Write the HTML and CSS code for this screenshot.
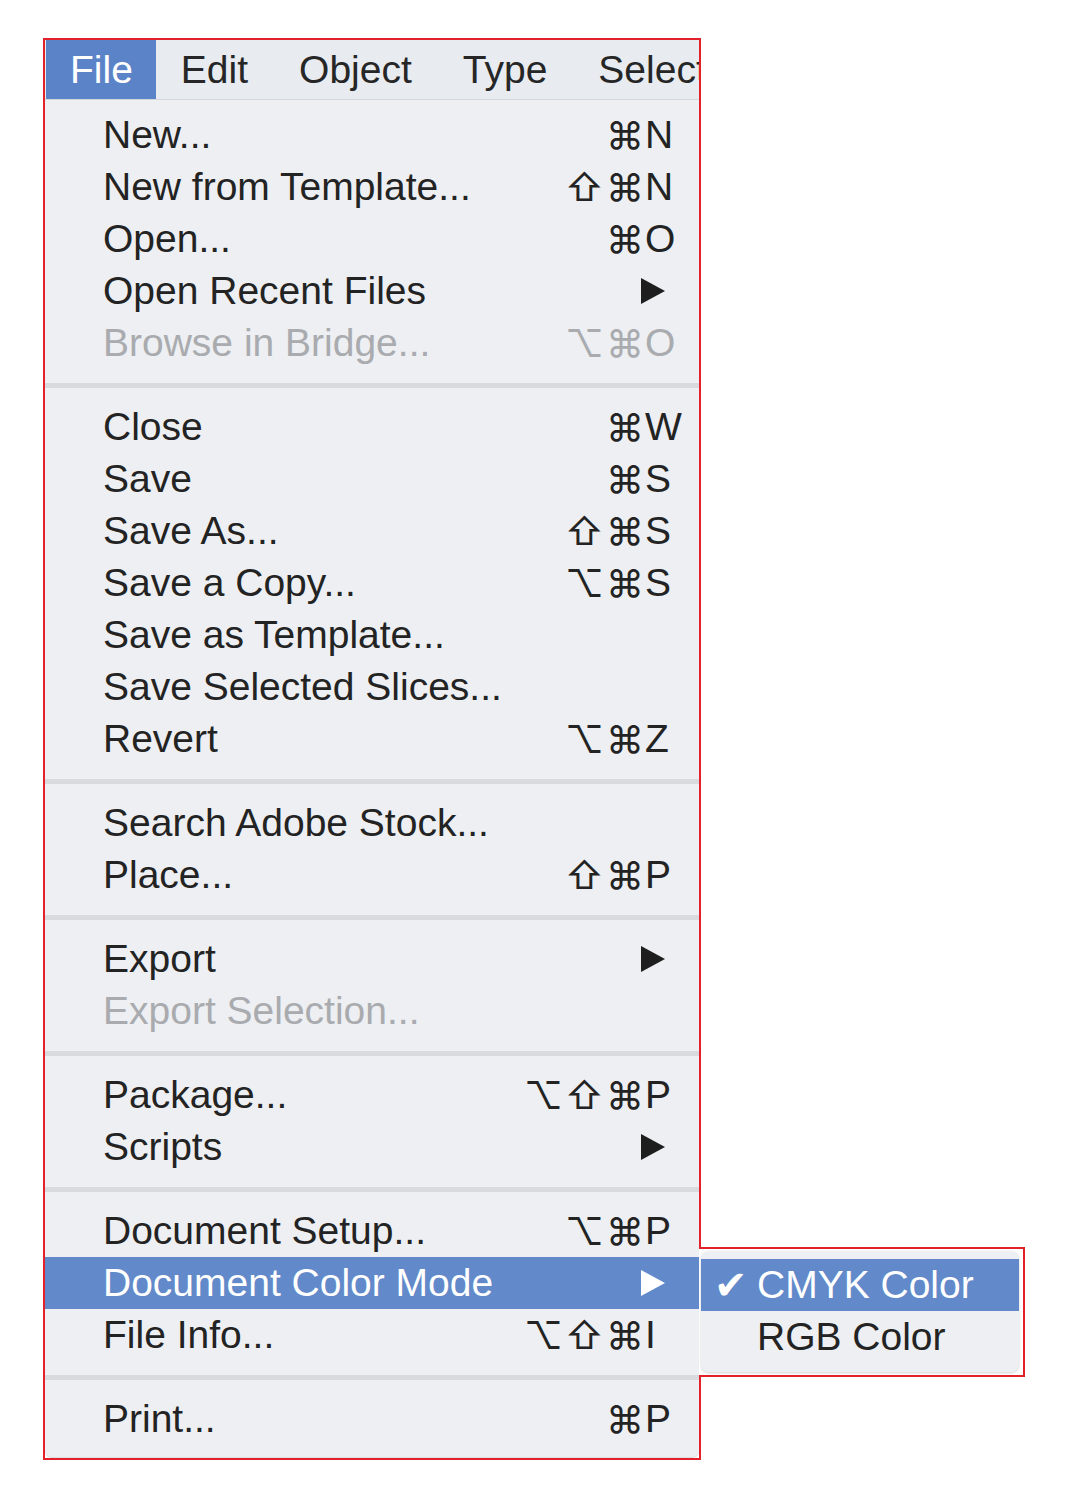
FILE: index.html
```html
<!DOCTYPE html>
<html>
<head>
<meta charset="utf-8">
<link rel="stylesheet" href="styles.css">
</head>
<body>
<div class="stage">
  <div class="menu-frame">
    <div class="menubar">
      <span class="mb-item active">File</span>
      <span class="mb-item">Edit</span>
      <span class="mb-item">Object</span>
      <span class="mb-item">Type</span>
      <span class="mb-item">Select</span>
    </div>
    <div class="panel">
      <div class="row"><span class="label">New...</span><span class="mods">⌘</span><span class="key">N</span></div>
      <div class="row"><span class="label">New from Template...</span><span class="mods">⇧⌘</span><span class="key">N</span></div>
      <div class="row"><span class="label">Open...</span><span class="mods">⌘</span><span class="key">O</span></div>
      <div class="row"><span class="label">Open Recent Files</span><span class="sub"><svg width="24" height="26" viewBox="0 0 24 26"><polygon points="0,0 24,13 0,26"/></svg></span></div>
      <div class="row disabled"><span class="label">Browse in Bridge...</span><span class="mods">⌥⌘</span><span class="key">O</span></div>
      <div class="sep"></div>
      <div class="row"><span class="label">Close</span><span class="mods">⌘</span><span class="key">W</span></div>
      <div class="row"><span class="label">Save</span><span class="mods">⌘</span><span class="key">S</span></div>
      <div class="row"><span class="label">Save As...</span><span class="mods">⇧⌘</span><span class="key">S</span></div>
      <div class="row"><span class="label">Save a Copy...</span><span class="mods">⌥⌘</span><span class="key">S</span></div>
      <div class="row"><span class="label">Save as Template...</span></div>
      <div class="row"><span class="label">Save Selected Slices...</span></div>
      <div class="row"><span class="label">Revert</span><span class="mods">⌥⌘</span><span class="key">Z</span></div>
      <div class="sep"></div>
      <div class="row"><span class="label">Search Adobe Stock...</span></div>
      <div class="row"><span class="label">Place...</span><span class="mods">⇧⌘</span><span class="key">P</span></div>
      <div class="sep"></div>
      <div class="row"><span class="label">Export</span><span class="sub"><svg width="24" height="26" viewBox="0 0 24 26"><polygon points="0,0 24,13 0,26"/></svg></span></div>
      <div class="row disabled"><span class="label">Export Selection...</span></div>
      <div class="sep"></div>
      <div class="row"><span class="label">Package...</span><span class="mods">⌥⇧⌘</span><span class="key">P</span></div>
      <div class="row"><span class="label">Scripts</span><span class="sub"><svg width="24" height="26" viewBox="0 0 24 26"><polygon points="0,0 24,13 0,26"/></svg></span></div>
      <div class="sep"></div>
      <div class="row"><span class="label">Document Setup...</span><span class="mods">⌥⌘</span><span class="key">P</span></div>
      <div class="row selected"><span class="label">Document Color Mode</span><span class="sub"><svg width="24" height="26" viewBox="0 0 24 26"><polygon points="0,0 24,13 0,26"/></svg></span></div>
      <div class="row"><span class="label">File Info...</span><span class="mods">⌥⇧⌘</span><span class="key">I</span></div>
      <div class="sep"></div>
      <div class="row"><span class="label">Print...</span><span class="mods">⌘</span><span class="key">P</span></div>
    </div>
    <div class="submenu">
      <div class="sub-panel">
        <div class="srow selected"><span class="check">✔</span><span class="label">CMYK Color</span></div>
        <div class="srow"><span class="check"></span><span class="label">RGB Color</span></div>
      </div>
    </div>
  </div>
</div>
</body>
</html>
```

FILE: styles.css
```css
html, body {
  margin: 0;
  padding: 0;
  background: #ffffff;
}

body {
  font-family: "Liberation Sans", Arial, sans-serif;
  color: #232323;
}

.stage {
  padding: 38px 0 0 43px;
}

.menu-frame {
  position: relative;
  width: 654px;
  border: 2px solid #e3212b;
  background: #ffffff;
}

.menubar {
  display: flex;
  height: 59px;
  background: #e8ebf0;
  border-bottom: 1px solid #d3d6db;
  overflow: hidden;
  white-space: nowrap;
}

.mb-item {
  flex: none;
  padding: 0 26px 0 25px;
  font-size: 39px;
  line-height: 59px;
  color: #262626;
}

.mb-item.active {
  background: #5b83c7;
  color: #ffffff;
  padding: 0 23px 0 24px;
  margin-left: 1px;
}

.mb-item:last-child {
  padding-right: 0;
}

.panel {
  background: #edeff2;
  padding: 9px 0 13px 0;
  border-radius: 0 0 7px 7px;
  box-shadow: inset 0 -1px 0 #dcdee2;
}

.row {
  display: flex;
  align-items: center;
  height: 52px;
  padding-left: 58px;
  font-size: 39px;
  white-space: nowrap;
}

.row .label {
  flex: 1;
}

.mods {
  flex: none;
  font-family: "Inter", sans-serif;
  font-size: 38px;
  letter-spacing: 2px;
  text-align: right;
  margin-right: -1px;
}

.key {
  flex: none;
  width: 54px;
}

.sub {
  flex: none;
  width: 58px;
  display: flex;
  align-items: center;
}

.sub svg {
  display: block;
  fill: #1e1e1e;
}

.row.disabled {
  color: #a9abaf;
}

.row.selected {
  background: #6289c9;
  color: #ffffff;
}

.row.selected .sub svg {
  fill: #ffffff;
}

.sep {
  height: 32px;
  display: flex;
  align-items: center;
}

.sep::before {
  content: "";
  display: block;
  width: 100%;
  height: 5px;
  background: #d8dadd;
}

.submenu {
  position: absolute;
  left: 654px;
  top: 1207px;
  width: 322px;
  height: 124px;
  border: 2px solid #e3212b;
  border-left: none;
  background: #ffffff;
  padding: 2px 0 0 2px;
  box-sizing: content-box;
}

.sub-panel {
  width: 318px;
  height: 121px;
  background: #edeff2;
  border-radius: 8px;
  box-shadow: 0 1px 3px rgba(0, 0, 0, 0.18);
  padding-top: 8px;
  box-sizing: border-box;
}

.srow {
  display: flex;
  align-items: center;
  height: 52px;
  padding-left: 13px;
  font-size: 39px;
  white-space: nowrap;
}

.srow.selected {
  background: #6289c9;
  color: #ffffff;
}

.check {
  flex: none;
  width: 43px;
  font-family: "DejaVu Sans", sans-serif;
  font-size: 40px;
  line-height: 1;
}
```
